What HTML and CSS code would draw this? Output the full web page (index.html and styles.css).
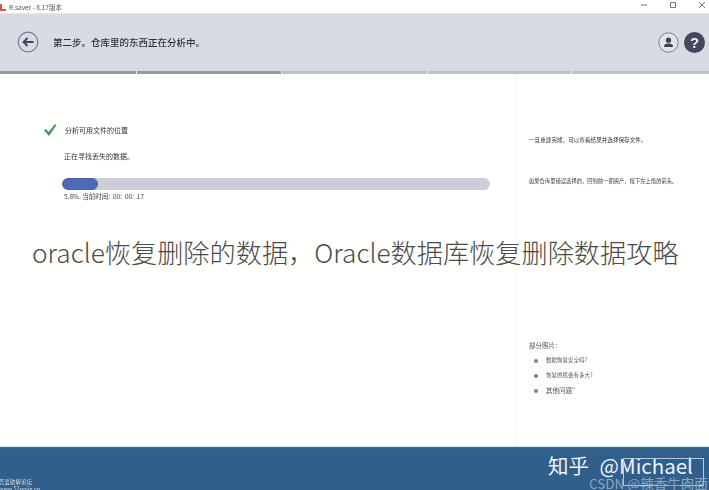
FILE: index.html
```html
<!DOCTYPE html>
<html lang="zh">
<head>
<meta charset="utf-8">
<title>oracle恢复删除的数据</title>
<link rel="stylesheet" href="styles.css">
</head>
<body>
<div class="app">
  <div class="titlebar">
    <div class="app-name">
      <svg class="app-icon" width="6" height="8" viewBox="0 0 6 8"><path d="M0 1h2v5h4v2H0z" fill="#d9534f"/></svg>
      <span>R.saver - 8.17版本</span>
    </div>
    <div class="win-controls">
      <svg width="8" height="8" viewBox="0 0 8 8"><path d="M1 4h6" stroke="#777" fill="none"/></svg>
      <svg width="8" height="8" viewBox="0 0 8 8"><path d="M1.500 1.500h5v5h-5z" stroke="#777" fill="none"/></svg>
      <svg width="8" height="8" viewBox="0 0 8 8"><path d="M1 1l6 6M7 1l-6 6" stroke="#777" fill="none"/></svg>
    </div>
  </div>

  <header class="header">
    <div class="header-left">
      <svg class="back" width="22" height="22" viewBox="0 0 22 22">
        <circle cx="11" cy="11" r="9.800" fill="none" stroke="#7b7e8a" stroke-width="1.200"/>
        <path d="M16.500 11H6.500M10.500 7l-4 4 4 4" fill="none" stroke="#3f4252" stroke-width="1.800"/>
      </svg>
      <h1 class="step-title">第二步。仓库里的东西正在分析中。</h1>
    </div>
    <div class="header-right">
      <svg width="21" height="21" viewBox="0 0 21 21">
        <circle cx="10.500" cy="10.500" r="9.700" fill="#e2e4ec" stroke="#7b7e8a" stroke-width="1"/>
        <circle cx="10.500" cy="8.200" r="2.600" fill="#3f4252"/>
        <path d="M6 15c0-3 2-3.500 4.500-3.500S15 12 15 15z" fill="#3f4252"/>
      </svg>
      <div class="help">?</div>
    </div>
  </header>

  <div class="stepper">
    <div class="step step-done step-a"></div>
    <div class="step step-done step-b"></div>
    <div class="step step-c"></div>
    <div class="step step-d"></div>
    <div class="step step-e"></div>
  </div>

  <main class="main">
    <section class="left">
      <div class="task">
        <svg class="check" width="14" height="14" viewBox="0 0 14 14"><path d="M1 7.500l2-1.500 2.500 3L12 1l1.500 1L6 13z" fill="#3f9a63"/></svg>
        <span>分析可用文件的位置</span>
      </div>
      <p class="searching">正在寻找丢失的数据。</p>
      <div class="track"><div class="fill"></div></div>
      <p class="time">5.8%. 当前时间:&nbsp; 00:&nbsp; 00:&nbsp; 17</p>
    </section>
    <aside class="right">
      <p class="note note-first">一旦重建完成，可以查看结果并选择保存文件。</p>
      <p class="note note-second">如果仓库里错误选择的，回到前一期资产，按下左上角的箭头。</p>
      <div class="faq">
        <p class="faq-title">部分照片：</p>
        <ul class="faq-list">
          <li>数据恢复安全吗?</li>
          <li>恢复的机会有多大?</li>
          <li class="faq-big">其他问题"</li>
        </ul>
      </div>
    </aside>
  </main>

  <footer class="footer">
    <div class="forum">
      <span>吾爱破解论坛</span>
      <span>www.52pojie.cn</span>
    </div>
    <div class="zhihu">知乎 @Michael</div>
    <div class="mark-box"></div>
    <div class="csdn">CSDN @辣香牛肉面</div>
  </footer>

  <div class="headline">oracle恢复删除的数据，Oracle数据库恢复删除数据攻略</div>
</div>
</body>
</html>
```
FILE: styles.css
```css
* { box-sizing: border-box; }
html, body { margin: 0; padding: 0; }
body {
  width: 709px;
  height: 490px;
  overflow: hidden;
  background: #fff;
  font-family: "Noto Sans CJK SC", "Liberation Sans", sans-serif;
}
p, h1, ul { margin: 0; padding: 0; }

.app {
  position: relative;
  width: 709px;
  height: 490px;
  display: flex;
  flex-direction: column;
  overflow: hidden;
}

.titlebar {
  height: 14px;
  flex: none;
  display: flex;
  justify-content: space-between;
  align-items: center;
  background: #fff;
  border-bottom: 1px solid #e6e6e6;
}
.app-name {
  display: flex;
  align-items: center;
  gap: 3px;
  font-size: 6.500px;
  color: #555;
  filter: blur(0.3px);
}
.win-controls {
  display: flex;
  gap: 21px;
  padding-right: 3px;
  margin-top: -4px;
}

.header {
  height: 57px;
  flex: none;
  display: flex;
  justify-content: space-between;
  align-items: center;
  padding: 0 4px 1px 17px;
  background: #d8dae5;
}
.header-left { display: flex; align-items: center; gap: 14px; }
.back { filter: blur(0.3px); }
.step-title {
  font-size: 9.500px;
  font-weight: 500;
  color: #2d2f3a;
  filter: blur(0.3px);
}
.header-right { display: flex; align-items: center; gap: 5px; filter: blur(0.3px); }
.help {
  width: 21px;
  height: 21px;
  border-radius: 50%;
  background: #45485a;
  color: #eceef3;
  font: 700 15px/21px "Liberation Sans", sans-serif;
  text-align: center;
}

.stepper {
  height: 3px;
  flex: none;
  display: flex;
  gap: 1px;
  background: #eef0f4;
}
.step { background: #bfc1c9; }
.step-done { background: #9698a3; }
.step-a { width: 136px; }
.step-b { width: 144px; }
.step-c { width: 145px; }
.step-d { width: 143px; }
.step-e { flex: 1; }

.main { flex: 1; display: flex; min-height: 0; background: #fffffd; }
.left { width: 516px; flex: none; padding: 49px 26px 0 43px; }
.task {
  display: flex;
  align-items: center;
  gap: 8px;
  font-size: 7px;
  line-height: 14px;
  color: #333;
  filter: blur(0.3px);
}
.searching {
  margin: 14px 0 0 21px;
  font-size: 7px;
  line-height: 10px;
  color: #333;
  filter: blur(0.3px);
}
.track {
  margin: 17px 0 0 19px;
  height: 12px;
  border-radius: 6px;
  background: #cdced8;
  overflow: hidden;
}
.fill {
  width: 36px;
  height: 100%;
  border-radius: 6px;
  background: #5068b8;
  border: 1px solid #4a5f9c;
}
.time {
  margin: 2px 0 0 21px;
  font-size: 6.500px;
  line-height: 9px;
  color: #444;
  filter: blur(0.3px);
}

.right {
  flex: 1;
  display: flex;
  flex-direction: column;
  padding: 62px 0 0 12px;
  border-left: 1px solid #f6f6f8;
}
.note {
  line-height: 9px;
  color: #333;
  filter: blur(0.3px);
  white-space: nowrap;
}
.note-first { font-size: 5.600px; }
.note-second { margin-top: 32px; font-size: 5.300px; }
.faq { margin-top: 155px; filter: blur(0.35px); color: #555; }
.faq-title { font-size: 6.500px; line-height: 9px; }
.faq-list {
  list-style: none;
  margin-top: 6px;
  padding-left: 5px;
  display: flex;
  flex-direction: column;
  gap: 6px;
  font-size: 5.500px;
  line-height: 9px;
}
.faq-list li { display: flex; align-items: center; gap: 8px; }
.faq-list li::before {
  content: "";
  width: 4px;
  height: 4px;
  border-radius: 50%;
  background: #6d8a80;
}
.faq-big { font-size: 6.500px; }

.footer {
  position: relative;
  height: 43px;
  flex: none;
  background: #2f5f8a;
  border-top: 2px solid #3c6584;
  box-shadow: 0 -1px 0 #dcebf0;
}
.forum {
  position: absolute;
  left: -1px;
  bottom: -3px;
  display: flex;
  flex-direction: column;
  font-size: 5.500px;
  line-height: 7px;
  color: #d5dfe8;
  filter: blur(0.3px);
}
.zhihu {
  position: absolute;
  left: 548px;
  top: 3px;
  font-size: 20.500px;
  line-height: 26px;
  word-spacing: 6px;
  color: #eef2f6;
  white-space: nowrap;
}
.mark-box {
  position: absolute;
  left: 623px;
  top: 9px;
  width: 81px;
  height: 28px;
  border: 1px solid #b9cad9;
}
.csdn {
  position: absolute;
  left: 589px;
  top: 25px;
  font-size: 13.500px;
  line-height: 18px;
  color: #8ca6c2;
  white-space: nowrap;
}

.headline {
  position: absolute;
  left: 32px;
  top: 234px;
  font-size: 26.200px;
  line-height: 36px;
  font-weight: 300;
  color: #4a4a4a;
  white-space: nowrap;
}
```
